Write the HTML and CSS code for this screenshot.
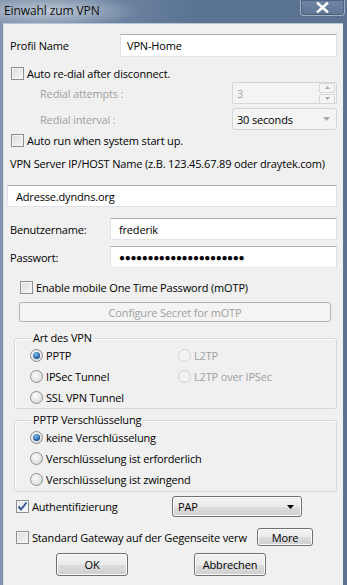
FILE: index.html
```html
<!DOCTYPE html>
<html lang="de">
<head>
<meta charset="UTF-8">
<title>Einwahl zum VPN</title>
<link rel="stylesheet" href="styles.css">
</head>
<body>
<div class="window">
    <div class="titlebar">
        <span class="title">Einwahl zum VPN</span>
        <span class="close">
            <svg width="13" height="11" viewBox="0 0 13 11"><path d="M2 1.5 L11 9.5 M11 1.5 L2 9.5" stroke="#fff" stroke-width="2.6" stroke-linecap="square"/></svg>
        </span>
    </div>

    <div class="client">
        <div class="row row-profile">
            <span class="lbl lbl-wide">Profil Name</span>
            <div class="edit">VPN-Home</div>
        </div>

        <div class="row chk-row row-redial">
            <span class="cb"></span><span>Auto re-dial after disconnect.</span>
        </div>

        <div class="row row-sub">
            <span class="lbl dim sub-lbl">Redial attempts :</span>
            <div class="spin">
                <span class="spin-val">3</span>
                <span class="spin-btns">
                    <span class="spin-btn"><svg width="5" height="3" viewBox="0 0 5 3"><path d="M0 3 L2.5 0 L5 3Z" fill="#a8a8a8"/></svg></span>
                    <span class="spin-btn"><svg width="5" height="3" viewBox="0 0 5 3"><path d="M0 0 L2.5 3 L5 0Z" fill="#a8a8a8"/></svg></span>
                </span>
            </div>
        </div>

        <div class="row row-sub row-interval">
            <span class="lbl dim sub-lbl">Redial interval :</span>
            <div class="combo-off">
                <span>30 seconds</span>
                <svg width="7" height="4" viewBox="0 0 7 4"><path d="M0 0 L3.5 4 L7 0Z" fill="#a8a8a8"/></svg>
            </div>
        </div>

        <div class="row chk-row row-autorun">
            <span class="cb"></span><span>Auto run when system start up.</span>
        </div>

        <div class="row row-server">VPN Server IP/HOST Name (z.B. 123.45.67.89 oder draytek.com)</div>

        <div class="row row-address">
            <div class="edit">Adresse.dyndns.org</div>
        </div>

        <div class="row row-user">
            <span class="lbl lbl-user">Benutzername:</span>
            <div class="edit">frederik</div>
        </div>

        <div class="row row-pass">
            <span class="lbl lbl-user">Passwort:</span>
            <div class="edit pass">&#9679;&#9679;&#9679;&#9679;&#9679;&#9679;&#9679;&#9679;&#9679;&#9679;&#9679;&#9679;&#9679;&#9679;&#9679;&#9679;&#9679;&#9679;&#9679;&#9679;&#9679;&#9679;</div>
        </div>

        <div class="row chk-row row-motp">
            <span class="cb"></span><span>Enable mobile One Time Password (mOTP)</span>
        </div>

        <div class="btn btn-off btn-motp">Configure Secret for mOTP</div>

        <fieldset class="group group-vpn">
            <legend>Art des VPN</legend>
            <div class="radio-grid">
                <div class="opt"><span class="rb on"></span>PPTP</div>
                <div class="opt dim"><span class="rb off"></span>L2TP</div>
                <div class="opt"><span class="rb"></span>IPSec Tunnel</div>
                <div class="opt dim"><span class="rb off"></span>L2TP over IPSec</div>
                <div class="opt"><span class="rb"></span>SSL VPN Tunnel</div>
            </div>
        </fieldset>

        <fieldset class="group group-enc">
            <legend>PPTP Verschlüsselung</legend>
            <div class="opt"><span class="rb on"></span>keine Verschlüsselung</div>
            <div class="opt"><span class="rb"></span>Verschlüsselung ist erforderlich</div>
            <div class="opt"><span class="rb"></span>Verschlüsselung ist zwingend</div>
        </fieldset>

        <div class="row row-auth">
            <div class="chk-row auth-chk">
                <span class="cb checked">
                    <svg width="11" height="11" viewBox="0 0 11 11"><path d="M1.5 5.5 L4 8.5 L9.5 1.5" fill="none" stroke="#3d5a98" stroke-width="2"/></svg>
                </span><span>Authentifizierung</span>
            </div>
            <div class="combo">
                <span>PAP</span>
                <svg width="7" height="4" viewBox="0 0 7 4"><path d="M0 0 L3.5 4 L7 0Z" fill="#000"/></svg>
            </div>
        </div>

        <div class="row row-gateway">
            <div class="chk-row auth-chk">
                <span class="cb"></span><span>Standard Gateway auf der Gegenseite verw</span>
            </div>
            <div class="btn btn-more">More</div>
        </div>

        <div class="row row-actions">
            <div class="btn btn-action">OK</div>
            <div class="btn btn-action">Abbrechen</div>
        </div>
    </div>
</div>
</body>
</html>
```

FILE: styles.css
```css
body {
    margin: 0;
    font-family: "Open Sans", "Noto Sans", sans-serif;
    font-size: 11px;
    letter-spacing: -0.17px;
    color: #000;
}

.window {
    width: 347px;
    height: 585px;
    overflow: hidden;
    display: flex;
    flex-direction: column;
    background: linear-gradient(to right, #8194ab 0%, #6f86a3 30%, #5b7493 55%, #5b7292 100%);
}

/* Title bar */
.titlebar {
    height: 23px;
    display: flex;
    align-items: flex-start;
    background: radial-gradient(ellipse 90px 16px at 50px 11px, rgba(205, 214, 224, 0.8), rgba(205, 214, 224, 0) 100%);
}

.title {
    padding: 3px 0 0 4px;
    font-size: 12px;
    line-height: 16px;
    letter-spacing: -0.1px;
    color: #111;
}

.close {
    margin-left: auto;
    margin-right: 2px;
    width: 43px;
    height: 15px;
    display: flex;
    align-items: center;
    justify-content: center;
    border: 1px solid #9fb0c5;
    border-top: none;
    border-radius: 0 0 4px 4px;
    background: linear-gradient(#6e86a4, #5e7696);
    box-shadow: inset 0 0 0 1px rgba(60, 80, 110, 0.6);
}

/* Client area */
.client {
    flex: 1;
    margin: 0 4px 0 3px;
    background: #f0f0f0;
    border-top: 1px solid #b9c6d5;
    border-left: 1px solid #d9dee6;
    padding: 10px 6px 0 6px;
    display: flex;
    flex-direction: column;
}

.row {
    display: flex;
    align-items: center;
}

.lbl {
    flex: none;
}

.lbl-wide {
    width: 110px;
}

.lbl-user {
    width: 100px;
}

.dim {
    color: #a0a0a0;
}

.edit {
    flex: 1;
    height: 23px;
    box-sizing: border-box;
    background: #fff;
    border: 1px solid #e2e3ea;
    border-top-color: #abadb3;
    padding: 0 6px;
    display: flex;
    align-items: center;
}

.chk-row {
    display: flex;
    align-items: center;
    height: 18px;
}

.cb {
    flex: none;
    width: 13px;
    height: 13px;
    box-sizing: border-box;
    margin: 0 3px 0 1px;
    border: 1px solid #8e8f8f;
    background: linear-gradient(135deg, #d9dbdf, #f7f7f7);
    box-shadow: inset 0 0 0 1px #f4f4f4;
    display: flex;
    align-items: center;
    justify-content: center;
}

.cb.checked {
    background: linear-gradient(135deg, #e2e6ee, #fafafa);
}

.row-redial {
    margin-top: 7px;
}

.row-sub {
    height: 22px;
}

.sub-lbl {
    flex: 1;
    padding-left: 30px;
}

.spin {
    width: 105px;
    height: 22px;
    box-sizing: border-box;
    border: 1px solid #d3d5d8;
    border-radius: 2px;
    background: #f4f4f4;
    display: flex;
    align-items: center;
    color: #a0a0a0;
}

.spin-val {
    flex: 1;
    padding-left: 4px;
}

.spin-btns {
    display: flex;
    flex-direction: column;
    gap: 1px;
    margin-right: 1px;
}

.spin-btn {
    width: 14px;
    height: 8px;
    border: 1px solid #d6d6d6;
    border-radius: 2px;
    background: #f4f4f4;
    display: flex;
    align-items: center;
    justify-content: center;
}

.row-interval {
    margin-top: 4px;
}

.combo-off {
    width: 105px;
    height: 22px;
    box-sizing: border-box;
    border: 1px solid #d3d5d8;
    border-radius: 3px;
    background: #f4f4f4;
    display: flex;
    align-items: center;
    justify-content: space-between;
    padding: 0 6px 0 4px;
}

.row-autorun {
    margin-top: 1px;
}

.row-server {
    height: 18px;
    margin-top: 5px;
}

.row-address {
    margin-top: 13px;
    margin-left: -3px;
}

.row-address .edit {
    height: 22px;
    padding-left: 8px;
}

.row-user {
    margin-top: 11px;
}

.row-pass {
    margin-top: 6px;
}

.row-user .edit,
.row-pass .edit {
    height: 22px;
    padding-left: 8px;
}

.pass {
    font-size: 10px;
    letter-spacing: -0.35px;
}

.row-motp {
    margin-top: 10px;
    padding-left: 9px;
}

/* Buttons */
.btn {
    box-sizing: border-box;
    border: 1px solid #707070;
    border-radius: 3px;
    background: linear-gradient(#f2f2f2 0%, #ebebeb 50%, #dddddd 51%, #cfcfcf 100%);
    box-shadow: inset 0 0 0 1px #fcfcfc;
    display: flex;
    align-items: center;
    justify-content: center;
}

.btn-off {
    border-color: #adb2b5;
    background: #f4f4f4;
    box-shadow: none;
    color: #a0a0a0;
}

.btn-motp {
    margin: 6px 0 0 9px;
    width: 312px;
    height: 20px;
}

/* Group boxes */
.group {
    margin: 9px 0 0 4px;
    width: 323px;
    box-sizing: border-box;
    padding: 0 0 0 15px;
    border: 1px solid #d5d9dc;
    border-radius: 3px;
    box-shadow: inset 1px 1px 0 #fff;
}

.group legend {
    margin-left: 1px;
    padding: 0 2px;
    line-height: 14px;
}

.radio-grid {
    display: grid;
    grid-template-columns: 148px 1fr;
}

.opt {
    height: 21px;
    display: flex;
    align-items: center;
}

.rb {
    flex: none;
    width: 13px;
    height: 13px;
    box-sizing: border-box;
    margin-right: 3px;
    border-radius: 50%;
    border: 1px solid #8e8f8f;
    background: radial-gradient(circle at 40% 35%, #fbfbfb, #d2d4d8);
    position: relative;
}

.rb.on::after {
    content: "";
    position: absolute;
    left: 2px;
    top: 2px;
    width: 7px;
    height: 7px;
    border-radius: 50%;
    background: radial-gradient(circle at 40% 35%, #7cc1ee, #1e5493 70%, #173c72);
}

.rb.off {
    border-color: #d2d2d2;
    background: #f2f2f2;
}

.group-enc {
    margin-top: 4px;
    padding-bottom: 1px;
}

.row-auth {
    margin-top: 4px;
    height: 21px;
    padding-left: 5px;
}

.auth-chk {
    width: 157px;
}

.combo {
    width: 130px;
    height: 21px;
    box-sizing: border-box;
    border: 1px solid #707070;
    border-radius: 3px;
    background: linear-gradient(#f2f2f2 0%, #ebebeb 50%, #dddddd 51%, #cfcfcf 100%);
    box-shadow: inset 0 0 0 1px #fcfcfc;
    display: flex;
    align-items: center;
    justify-content: space-between;
    padding: 0 7px 0 5px;
}

.row-gateway {
    margin-top: 11px;
    height: 18px;
    padding-left: 5px;
}

.row-gateway .auth-chk {
    width: 240px;
}

.btn-more {
    margin-left: auto;
    margin-right: 24px;
    width: 56px;
    height: 18px;
}

.row-actions {
    margin-top: 7px;
    padding-left: 46px;
    gap: 66px;
}

.btn-action {
    width: 72px;
    height: 23px;
}
```
